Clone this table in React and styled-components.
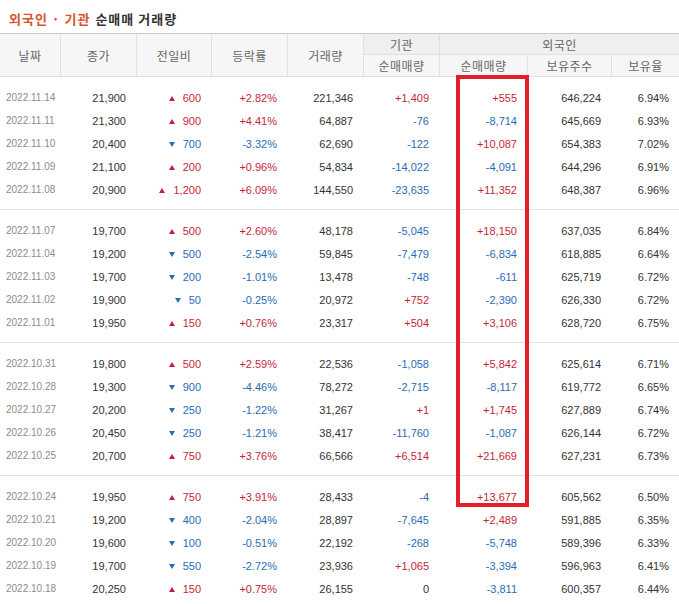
import React from 'react';
import styled, { createGlobalStyle } from 'styled-components';

const GlobalStyle = createGlobalStyle`
    body {
        margin: 0;
        background: #ffffff;
        font-family: "Liberation Sans", "Noto Sans CJK KR", sans-serif;
    }
`;

const Page = styled.div`
    width: 679px;
    position: relative;
`;

const Title = styled.h2`
    margin: 0;
    height: 33px;
    padding: 3px 0 0 9px;
    box-sizing: border-box;
    display: flex;
    align-items: center;
    font-family: "Noto Sans CJK KR", sans-serif;
    font-size: 13px;
    font-weight: bold;
    color: #333333;
    letter-spacing: 1px;
`;

const Accent = styled.span`
    color: #d9542b;
    margin-right: 5px;
`;

const Head = styled.div`
    display: grid;
    grid-template-columns: 60px 76px 75px 76px 76px 76px 88px 84px 68px;
    grid-template-rows: 21px 21px;
    border-top: 1px solid #c9c9c9;
    border-bottom: 1px solid #dcdcdc;
`;

const HeadCell = styled.div`
    display: flex;
    align-items: center;
    justify-content: center;
    grid-row: ${p => p.$row || 'auto'};
    grid-column: ${p => p.$col || 'auto'};
    background: ${p => (p.$top ? '#efefef' : '#f6f6f6')};
    border-left: ${p => (p.$first ? 'none' : '1px solid #e0e0e0')};
    border-bottom: ${p => (p.$split ? '1px solid #e0e0e0' : 'none')};
    font-family: "Noto Sans CJK KR", sans-serif;
    font-size: 12px;
    color: #666666;
    letter-spacing: 0.5px;
    box-sizing: border-box;
`;

const Group = styled.div`
    padding: 9px 0 8px;
    border-bottom: ${p => (p.$last ? 'none' : '1px solid #e2e2e2')};
`;

const Row = styled.div`
    display: grid;
    grid-template-columns: 60px 76px 75px 76px 76px 76px 88px 84px 68px;
    height: 23px;
    align-items: center;
`;

const DateCell = styled.div`
    padding-left: 6px;
    font-size: 10px;
    color: #8c8c8c;
    white-space: nowrap;
`;

const Num = styled.div`
    text-align: right;
    padding-right: 10px;
    font-size: 11px;
    white-space: nowrap;
    color: ${p => (p.$tone === 'up' ? '#c41f3b' : p.$tone === 'down' ? '#2a6cb5' : '#333333')};
`;

const Arrow = styled.span`
    display: inline-block;
    width: 0;
    height: 0;
    margin-right: 8px;
    vertical-align: 1px;
    border-left: 3px solid transparent;
    border-right: 3px solid transparent;
    border-bottom: ${p => (p.$up ? '5px solid #c41f3b' : 'none')};
    border-top: ${p => (p.$up ? 'none' : '5px solid #2a6cb5')};
`;

const Highlight = styled.div`
    position: absolute;
    left: 456px;
    top: 75px;
    width: 73px;
    height: 432px;
    border: 4px solid #e3202a;
    box-sizing: border-box;
    pointer-events: none;
`;

const groups = [
    [
        ['2022.11.14', '21,900', 1, '600', '+2.82%', '221,346', '+1,409', '+555', '646,224', '6.94%'],
        ['2022.11.11', '21,300', 1, '900', '+4.41%', '64,887', '-76', '-8,714', '645,669', '6.93%'],
        ['2022.11.10', '20,400', 0, '700', '-3.32%', '62,690', '-122', '+10,087', '654,383', '7.02%'],
        ['2022.11.09', '21,100', 1, '200', '+0.96%', '54,834', '-14,022', '-4,091', '644,296', '6.91%'],
        ['2022.11.08', '20,900', 1, '1,200', '+6.09%', '144,550', '-23,635', '+11,352', '648,387', '6.96%'],
    ],
    [
        ['2022.11.07', '19,700', 1, '500', '+2.60%', '48,178', '-5,045', '+18,150', '637,035', '6.84%'],
        ['2022.11.04', '19,200', 0, '500', '-2.54%', '59,845', '-7,479', '-6,834', '618,885', '6.64%'],
        ['2022.11.03', '19,700', 0, '200', '-1.01%', '13,478', '-748', '-611', '625,719', '6.72%'],
        ['2022.11.02', '19,900', 0, '50', '-0.25%', '20,972', '+752', '-2,390', '626,330', '6.72%'],
        ['2022.11.01', '19,950', 1, '150', '+0.76%', '23,317', '+504', '+3,106', '628,720', '6.75%'],
    ],
    [
        ['2022.10.31', '19,800', 1, '500', '+2.59%', '22,536', '-1,058', '+5,842', '625,614', '6.71%'],
        ['2022.10.28', '19,300', 0, '900', '-4.46%', '78,272', '-2,715', '-8,117', '619,772', '6.65%'],
        ['2022.10.27', '20,200', 0, '250', '-1.22%', '31,267', '+1', '+1,745', '627,889', '6.74%'],
        ['2022.10.26', '20,450', 0, '250', '-1.21%', '38,417', '-11,760', '-1,087', '626,144', '6.72%'],
        ['2022.10.25', '20,700', 1, '750', '+3.76%', '66,566', '+6,514', '+21,669', '627,231', '6.73%'],
    ],
    [
        ['2022.10.24', '19,950', 1, '750', '+3.91%', '28,433', '-4', '+13,677', '605,562', '6.50%'],
        ['2022.10.21', '19,200', 0, '400', '-2.04%', '28,897', '-7,645', '+2,489', '591,885', '6.35%'],
        ['2022.10.20', '19,600', 0, '100', '-0.51%', '22,192', '-268', '-5,748', '589,396', '6.33%'],
        ['2022.10.19', '19,700', 0, '550', '-2.72%', '23,936', '+1,065', '-3,394', '596,963', '6.41%'],
        ['2022.10.18', '20,250', 1, '150', '+0.75%', '26,155', '0', '-3,811', '600,357', '6.44%'],
    ],
];

// 부호로 색 결정
const tone = (v) => (v.startsWith('+') ? 'up' : v.startsWith('-') ? 'down' : null);

export default function App() {
    return (
        <Page>
            <GlobalStyle />
            <Title>
                <Accent>외국인 · 기관</Accent>순매매 거래량
            </Title>

            <Head>
                <HeadCell $row="1 / 3" $first>날짜</HeadCell>
                <HeadCell $row="1 / 3">종가</HeadCell>
                <HeadCell $row="1 / 3">전일비</HeadCell>
                <HeadCell $row="1 / 3">등락률</HeadCell>
                <HeadCell $row="1 / 3">거래량</HeadCell>
                <HeadCell $row="1" $col="6" $top $split>기관</HeadCell>
                <HeadCell $row="1" $col="7 / 10" $top $split>외국인</HeadCell>
                <HeadCell $row="2" $col="6">순매매량</HeadCell>
                <HeadCell $row="2" $col="7">순매매량</HeadCell>
                <HeadCell $row="2" $col="8">보유주수</HeadCell>
                <HeadCell $row="2" $col="9">보유율</HeadCell>
            </Head>

            {groups.map((rows, gi) => (
                <Group key={gi} $last={gi === groups.length - 1}>
                    {rows.map(r => (
                        <Row key={r[0]}>
                            <DateCell>{r[0]}</DateCell>
                            <Num>{r[1]}</Num>
                            <Num $tone={r[2] ? 'up' : 'down'}>
                                <Arrow $up={r[2]} />
                                {r[3]}
                            </Num>
                            <Num $tone={tone(r[4])}>{r[4]}</Num>
                            <Num>{r[5]}</Num>
                            <Num $tone={tone(r[6])}>{r[6]}</Num>
                            <Num $tone={tone(r[7])}>{r[7]}</Num>
                            <Num>{r[8]}</Num>
                            <Num>{r[9]}</Num>
                        </Row>
                    ))}
                </Group>
            ))}

            <Highlight />
        </Page>
    );
}
